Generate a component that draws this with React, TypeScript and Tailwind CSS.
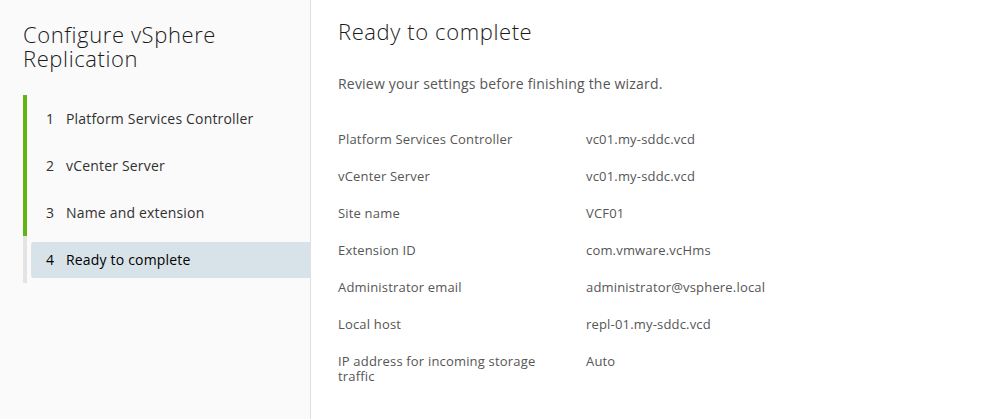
const steps = [
  { n: 1, label: "Platform Services Controller", done: true },
  { n: 2, label: "vCenter Server", done: true },
  { n: 3, label: "Name and extension", done: true },
  { n: 4, label: "Ready to complete", done: false, active: true },
];

const rows: [string, string][] = [
  ["Platform Services Controller", "vc01.my-sddc.vcd"],
  ["vCenter Server", "vc01.my-sddc.vcd"],
  ["Site name", "VCF01"],
  ["Extension ID", "com.vmware.vcHms"],
  ["Administrator email", "administrator@vsphere.local"],
  ["Local host", "repl-01.my-sddc.vcd"],
  ["IP address for incoming storage traffic", "Auto"],
];

export default function App() {
  return (
    <div
      className="flex w-[1005px] h-[419px] bg-white overflow-hidden"
      style={{ fontFamily: "'Open Sans', 'Noto Sans', sans-serif" }}
    >
      {/* Wizard nav */}
      <aside className="w-[311px] shrink-0 bg-[#fafafa] border-r border-[#e0e0e0] pt-[22px] pl-[23px]">
        <h2 className="text-[22px] leading-[24px] tracking-[0.6px] text-[#1b1b1b] font-light">
          Configure vSphere
          <br />
          Replication
        </h2>
        <ul className="mt-[25px]">
          {steps.map((s) => (
            <li
              key={s.n}
              className={`h-[47px] flex items-center border-l-4 pl-[4px] ${
                s.done ? "border-[#60b515]" : "border-[#e4e4e4]"
              }`}
            >
              <div
                className={`flex items-center w-full h-[36px] pl-[15px] rounded-l-[3px] text-[14px] tracking-[0.18px] ${
                  s.active ? "bg-[#d8e3e9] text-[#000000]" : "text-[#313131]"
                }`}
              >
                <span className="w-[20px]">{s.n}</span>
                <span>{s.label}</span>
              </div>
            </li>
          ))}
        </ul>
      </aside>

      {/* Content */}
      <main className="flex-1 pt-[19px] pl-[27px]">
        <h1 className="text-[22px] leading-[25px] tracking-[0.6px] text-[#1b1b1b] font-light">
          Ready to complete
        </h1>
        <p className="mt-[30px] text-[14px] leading-[20px] tracking-[0.2px] text-[#565656]">
          Review your settings before finishing the wizard.
        </p>
        <div className="mt-[38px]">
          {rows.map(([k, v]) => (
            <div
              key={k}
              className="flex min-h-[37px] text-[13px] leading-[15px] tracking-[0.18px] text-[#565656]"
            >
              <div className="w-[248px] pr-[30px]">{k}</div>
              <div>{v}</div>
            </div>
          ))}
        </div>
      </main>
    </div>
  );
}
